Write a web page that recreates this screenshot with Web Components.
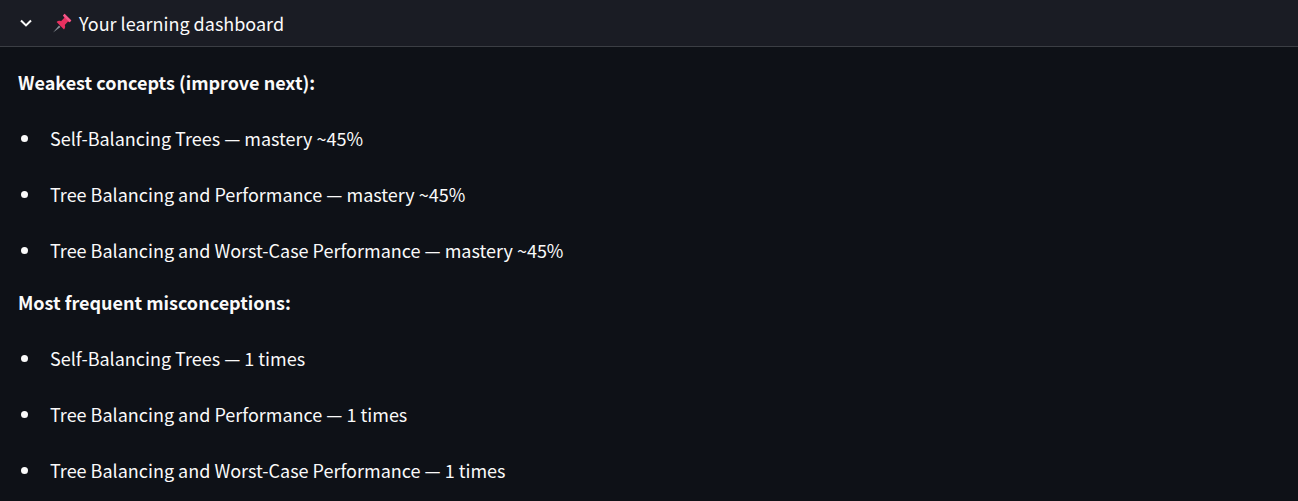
<!DOCTYPE html>
<html>
<head>
<meta charset="utf-8">
<title>Your learning dashboard</title>
<style>
	html, body {
		margin: 0;
		padding: 0;
		height: 100%;
		overflow: hidden;
		background: #0e1117;
	}
	body {
		font-family: "Noto Sans CJK SC", "Noto Sans", sans-serif;
		font-size: 18px;
		line-height: 28px;
		color: #fafafa;
	}
</style>
</head>
<body>

<template id="dash-expander">
	<style>
		:host {
			display: block;
		}
		header {
			display: flex;
			align-items: center;
			height: 46px;
			padding-left: 18px;
			background: #1a1c24;
			border-bottom: 1px solid #3b3e44;
		}
		.chevron {
			width: 16px;
			height: 16px;
			margin-right: 17px;
			flex: none;
		}
		.pin {
			width: 22px;
			height: 22px;
			margin-right: 6px;
			flex: none;
		}
		.content {
			display: flex;
			flex-direction: column;
			padding: 21px 18px 0;
		}
	</style>
	<header>
		<svg class="chevron" viewBox="0 0 16 16"><path d="M3 5.6 L8 10.4 L13 5.6" fill="none" stroke="#fafafa" stroke-width="2.1"/></svg>
		<svg class="pin" viewBox="0 0 22 22">
			<path d="M2 20.5 L8 13.5 L9.5 15 Z" fill="#8a8f98"/>
			<path d="M13.5 1.8 L20.3 8.6 L18.6 10.2 L17 9.6 L13.8 13 C14.6 15 14 16.4 13 17.4 L5.6 10 C6.8 8.8 8.4 8.4 10 9.2 L13.4 5.8 L12.4 4 Z" fill="#e8305f"/>
			<path d="M13.5 1.8 L20.3 8.6 L18.6 10.2 L11.9 3.6 Z" fill="#f4588a"/>
		</svg>
		<span><slot name="title"></slot></span>
	</header>
	<div class="content"><slot></slot></div>
</template>

<template id="dash-heading">
	<style>
		:host {
			display: block;
			font-weight: 700;
			margin-bottom: 28px;
		}
	</style>
	<slot></slot>
</template>

<template id="dash-list">
	<style>
		:host {
			display: flex;
			flex-direction: column;
			gap: 28px;
			margin-bottom: 24px;
		}
	</style>
	<slot></slot>
</template>

<template id="dash-item">
	<style>
		:host {
			display: flex;
			align-items: center;
			height: 28px;
			white-space: nowrap;
		}
		.dot {
			width: 7px;
			height: 7px;
			margin: 0 22px 0 3px;
			border-radius: 50%;
			background: #fafafa;
			flex: none;
		}
	</style>
	<span class="dot"></span><span><slot></slot></span>
</template>

<script>
for (const name of ['dash-expander', 'dash-heading', 'dash-list', 'dash-item']) {
	const t = document.querySelector('#' + name)
	customElements.define(name, class extends HTMLElement {
		constructor() {
			super()
			this.root = this.attachShadow({mode: 'open'})
			this.root.appendChild(t.content.cloneNode(true))
		}
	})
}
</script>

<dash-expander>
	<span slot="title">Your learning dashboard</span>
	<dash-heading>Weakest concepts (improve next):</dash-heading>
	<dash-list>
		<dash-item>Self-Balancing Trees — mastery ~45%</dash-item>
		<dash-item>Tree Balancing and Performance — mastery ~45%</dash-item>
		<dash-item>Tree Balancing and Worst-Case Performance — mastery ~45%</dash-item>
	</dash-list>
	<dash-heading>Most frequent misconceptions:</dash-heading>
	<dash-list>
		<dash-item>Self-Balancing Trees — 1 times</dash-item>
		<dash-item>Tree Balancing and Performance — 1 times</dash-item>
		<dash-item>Tree Balancing and Worst-Case Performance — 1 times</dash-item>
	</dash-list>
</dash-expander>

</body>
</html>
